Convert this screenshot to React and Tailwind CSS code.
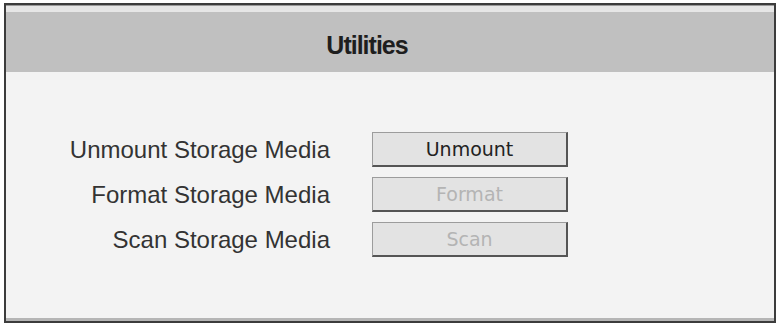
export default function App() {
  const rows = [
    { label: "Unmount Storage Media", btn: "Unmount", enabled: true },
    { label: "Format Storage Media", btn: "Format", enabled: false },
    { label: "Scan Storage Media", btn: "Scan", enabled: false },
  ];
  return (
    <div className="w-[779px] h-[325px] bg-white pt-[3px] pl-[4px]">
      <div className="w-[772px] h-[320px] border-2 border-[#3c3c3c] flex flex-col bg-[#f3f3f3]">
        <div className="h-[7px] bg-[#e6e6e6] border-t border-[#9a9a9a]" />
        <div className="h-[60px] bg-[#c0c0c0] flex items-center justify-center pt-[7px] pr-[46px]">
          <span
            className="text-[25px] font-bold tracking-[-1px] text-[#1e1e1e]"
            style={{ fontFamily: '"Liberation Sans", Arial, sans-serif' }}
          >
            Utilities
          </span>
        </div>
        <div className="flex-1 flex flex-col pt-[60px] border-b-[3px] border-[#b5b5b5]">
          <div className="flex flex-col gap-[10px]">
            {rows.map((r) => (
              <div key={r.label} className="flex items-center gap-[42px]">
                <div
                  className="w-[324px] text-right text-[24px] leading-none text-[#333]"
                  style={{ fontFamily: '"Liberation Sans", Arial, sans-serif' }}
                >
                  {r.label}
                </div>
                <div
                  className={`w-[196px] h-[35px] flex items-center justify-center bg-[#e3e3e3] border border-[#9c9c9c] border-b-2 border-r-2 border-b-[#555] border-r-[#555] text-[19px] ${
                    r.enabled ? "text-[#222]" : "text-[#b4b4b4]"
                  }`}
                  style={{ fontFamily: '"DejaVu Sans", Verdana, sans-serif' }}
                >
                  {r.btn}
                </div>
              </div>
            ))}
          </div>
        </div>
      </div>
    </div>
  );
}
